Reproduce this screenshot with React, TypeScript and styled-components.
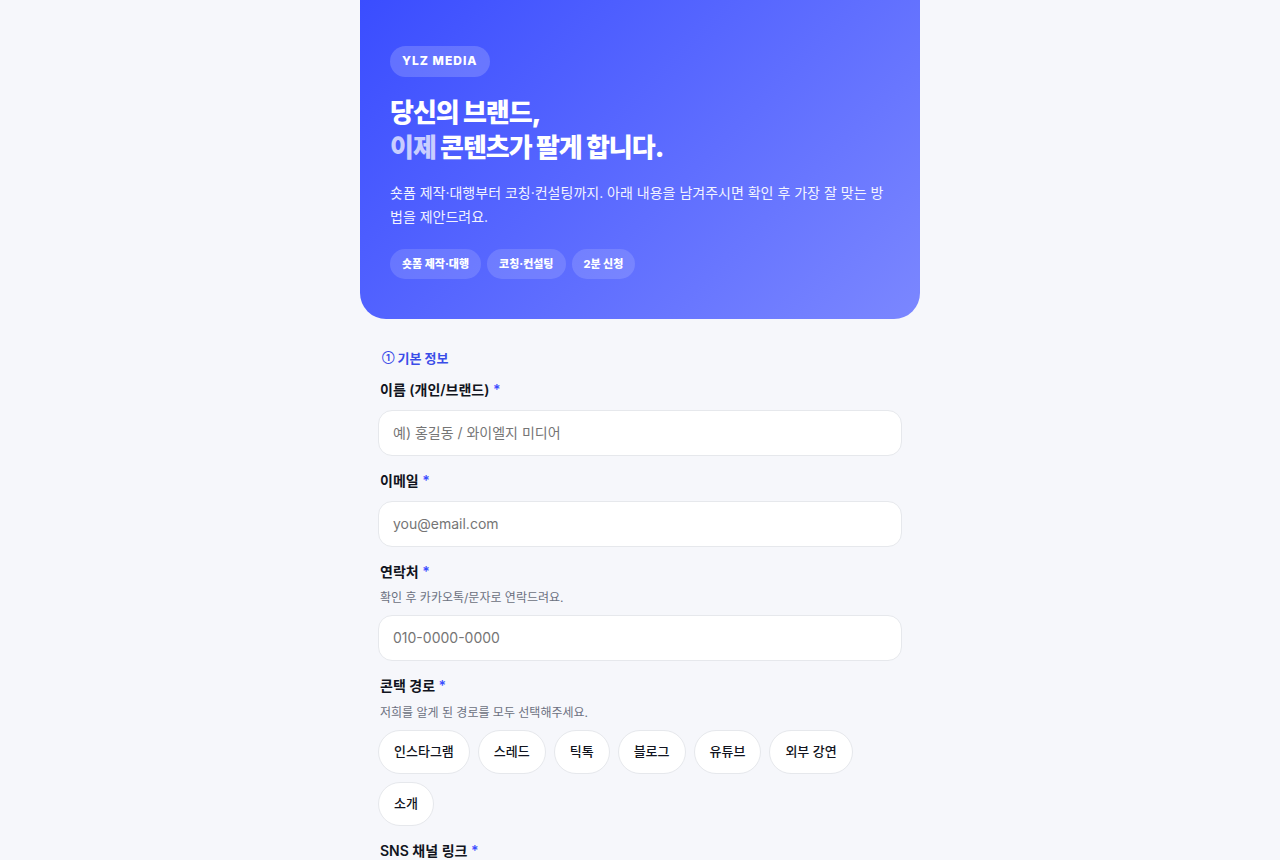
import React, { useState } from "react";
import styled, { createGlobalStyle } from "styled-components";

const GlobalStyle = createGlobalStyle`
  *, *::before, *::after { box-sizing: border-box; }
  body {
    margin: 0;
    background: #f6f7fb;
    color: #111420;
    font-family: Inter, "Noto Sans CJK KR", sans-serif;
    font-size: 14px;
  }
  h1, h2, p { margin: 0; }
  button, input { font-family: inherit; }
`;

const Page = styled.div`
  width: 100%;
  max-width: 560px;
  margin: 0 auto;
`;

const Hero = styled.header`
  padding: 46px 30px 40px;
  border-radius: 0 0 26px 26px;
  background: linear-gradient(135deg, #3a4dff 0%, #7b87ff 100%);
  color: #fff;
`;

const Brand = styled.span`
  display: inline-block;
  vertical-align: top;
  padding: 0 12px 1px;
  border-radius: 999px;
  background: rgba(255, 255, 255, 0.18);
  font-size: 12px;
  line-height: 30px;
  font-weight: 800;
  letter-spacing: 1px;
`;

const Title = styled.h1`
  margin-top: 18px;
  font-size: 26px;
  line-height: 35px;
  font-weight: 900;
  letter-spacing: -1px;
`;

const Muted = styled.span`
  opacity: 0.7;
`;

const Lead = styled.p`
  margin-top: 16px;
  font-size: 14px;
  line-height: 24px;
  word-break: break-all;
  opacity: 0.92;
`;

const TagList = styled.ul`
  display: flex;
  flex-wrap: wrap;
  gap: 6px;
  margin: 20px 0 0;
  padding: 0;
  list-style: none;
`;

const Tag = styled.li`
  padding: 0 12px;
  border-radius: 999px;
  background: rgba(255, 255, 255, 0.14);
  font-size: 11px;
  line-height: 30px;
  font-weight: 800;
`;

const Form = styled.form`
  padding: 28px 18px 40px;
`;

const SectionTitle = styled.h2`
  display: flex;
  align-items: center;
  gap: 3px;
  padding: 0 4px;
  margin-bottom: 10px;
  color: #3a4de8;
  font-size: 13px;
  line-height: 22px;
  font-weight: 700;
`;

const Step = styled.span`
  font-size: 9px;
`;

const Field = styled.div`
  margin-bottom: 14px;
`;

const Group = styled.fieldset`
  margin: 0 0 14px;
  padding: 0;
  border: 0;
  min-width: 0;
`;

const Label = styled.label`
  display: block;
  padding: 0 2px;
  margin-bottom: 9px;
  font-size: 14px;
  line-height: 22px;
  font-weight: 600;
`;

const Legend = styled(Label).attrs({ as: "legend" })`
  margin-bottom: 10px;
`;

const Required = styled.span`
  color: #3a4dff;
`;

const Hint = styled.p`
  padding: 0 2px;
  margin: -4px 0 7px;
  color: #6b7080;
  font-size: 12px;
  line-height: 20px;
`;

const TextInput = styled.input`
  display: block;
  width: 100%;
  height: 46px;
  padding: 0 14px 1px;
  border: 1px solid #e6e8ec;
  border-radius: 14px;
  background: #fff;
  color: inherit;
  font-size: 14px;
  outline: none;
  &::placeholder { color: #757575; opacity: 1; }
  &:focus { border-color: #3a4dff; }
`;

const Choices = styled.div`
  display: flex;
  flex-wrap: wrap;
  gap: 8px;
`;

const Choice = styled.label<{ $on: boolean }>`
  position: relative;
  padding: 0 15px 2px;
  border: 1px solid ${(p) => (p.$on ? "#3a4dff" : "#e6e8ec")};
  border-radius: 999px;
  background: ${(p) => (p.$on ? "#eef0ff" : "#fff")};
  font-size: 13px;
  line-height: 40px;
  font-weight: 500;
  cursor: pointer;
`;

const ChoiceInput = styled.input`
  position: absolute;
  inset: 0;
  margin: 0;
  opacity: 0;
  cursor: pointer;
`;

const tags = ["숏폼 제작·대행", "코칭·컨설팅", "2분 신청"];
const routes = ["인스타그램", "스레드", "틱톡", "블로그", "유튜브", "외부 강연", "소개"];

export default function App() {
  const [picked, setPicked] = useState<string[]>([]);
  const toggle = (r: string) =>
    setPicked((p) => (p.includes(r) ? p.filter((x) => x !== r) : [...p, r]));

  return (
    <>
      <GlobalStyle />
      <Page>
        <Hero>
          <Brand>YLZ MEDIA</Brand>
          <Title>
            당신의 브랜드,
            <br />
            <Muted>이제</Muted> 콘텐츠가 팔게 합니다.
          </Title>
          <Lead>
            숏폼 제작·대행부터 코칭·컨설팅까지. 아래 내용을 남겨주시면 확인 후 가장 잘 맞는 방법을 제안드려요.
          </Lead>
          <TagList>
            {tags.map((t) => (
              <Tag key={t}>{t}</Tag>
            ))}
          </TagList>
        </Hero>
        <Form onSubmit={(e) => e.preventDefault()}>
          <SectionTitle>
            <Step>①</Step>
            <span>기본 정보</span>
          </SectionTitle>
          <Field>
            <Label htmlFor="name">
              이름 (개인/브랜드) <Required>*</Required>
            </Label>
            <TextInput id="name" placeholder="예) 홍길동 / 와이엘지 미디어" />
          </Field>
          <Field>
            <Label htmlFor="email">
              이메일 <Required>*</Required>
            </Label>
            <TextInput id="email" type="email" placeholder="you@email.com" />
          </Field>
          <Field>
            <Label htmlFor="phone">
              연락처 <Required>*</Required>
            </Label>
            <Hint>확인 후 카카오톡/문자로 연락드려요.</Hint>
            <TextInput id="phone" type="tel" placeholder="010-0000-0000" />
          </Field>
          <Group>
            <Legend>
              콘택 경로 <Required>*</Required>
            </Legend>
            <Hint>저희를 알게 된 경로를 모두 선택해주세요.</Hint>
            <Choices>
              {routes.map((r) => (
                <Choice key={r} $on={picked.includes(r)}>
                  <ChoiceInput type="checkbox" checked={picked.includes(r)} onChange={() => toggle(r)} />
                  {r}
                </Choice>
              ))}
            </Choices>
          </Group>
          <Field>
            <Label htmlFor="sns">
              SNS 채널 링크 <Required>*</Required>
            </Label>
            <TextInput id="sns" type="url" />
          </Field>
        </Form>
      </Page>
    </>
  );
}
